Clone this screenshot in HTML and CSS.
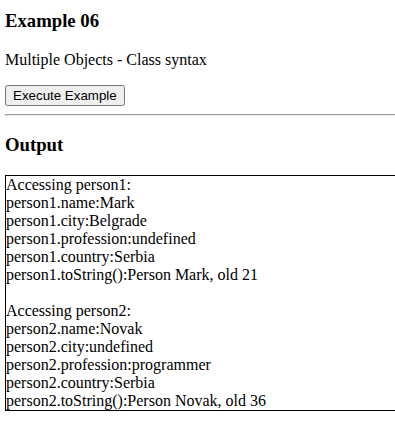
FILE: index.html
```html
<!DOCTYPE html>
<html lang="en">
<head>
  <meta charset="UTF-8">
  <meta name="viewport" content="width=device-width, initial-scale=1.0">
  <title>Example 06</title>
  <link rel="stylesheet" href="styles.css">
</head>
<body>
  <h3 class="page-title">Example 06</h3>
  <p>Multiple Objects - Class syntax</p>
  <button class="run-button">Execute Example</button>
  <hr>
  <h3>Output</h3>
  <div class="output" id="output">
    Accessing person1:<br>
    person1.name:Mark<br>
    person1.city:Belgrade<br>
    person1.profession:undefined<br>
    person1.country:Serbia<br>
    person1.toString():Person Mark, old 21<br>
    <br>
    Accessing person2:<br>
    person2.name:Novak<br>
    person2.city:undefined<br>
    person2.profession:programmer<br>
    person2.country:Serbia<br>
    person2.toString():Person Novak, old 36
  </div>
</body>
</html>
```

FILE: styles.css
```css
html {
  overflow: hidden;
}

body {
  font-family: "Liberation Serif", "Times New Roman", serif;
  margin: 0 -10px 0 5px;
  color: #000;
  background-color: #fff;
}

.page-title {
  margin-top: 10px;
}

.run-button {
  font-family: "Liberation Sans", Arial, sans-serif;
  font-size: 13.33px;
}

.output {
  border: 1px solid #000;
  line-height: 18px;
}
```
